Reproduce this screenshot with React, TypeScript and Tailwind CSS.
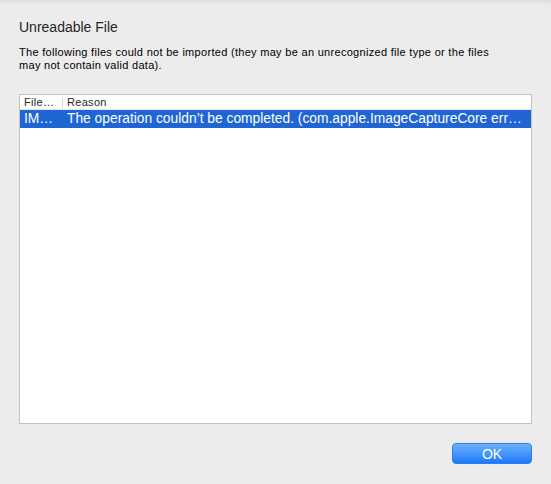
const App = () => {
	return (
		<div
			className="relative w-[551px] h-[484px] bg-[#ececec] text-[#1a1a1a] overflow-hidden"
			style={{ fontFamily: '"Liberation Sans", Arial, sans-serif' }}
		>
			{/* window top shade */}
			<div className="absolute top-0 left-0 right-0 h-[5px] bg-gradient-to-b from-[#dcdcdc] to-[#ececec]" />

			<div className="flex flex-col px-[19px] pt-[18px]">
				<h1 className="text-[14px] leading-[18px] text-[#262626]">Unreadable File</h1>
				<p className="mt-[10px] text-[11px] leading-[13px] tracking-[0.3px] text-black w-[486px]">
					The following files could not be imported (they may be an unrecognized file type or the files may not
					contain valid data).
				</p>

				<div className="mt-[22px] h-[330px] bg-white border border-[#c2c2c2] flex flex-col">
					<div className="flex h-[15px] items-center text-[11px] tracking-[0.3px] text-[#262626] border-b border-[#e6e6e6]">
						<div className="w-[42px] pl-[4px] shrink-0">File…</div>
						<div className="h-[11px] w-px bg-[#d6d6d6]" />
						<div className="pl-[4px]">Reason</div>
					</div>
					<div className="flex h-[18px] items-center text-[13.8px] text-white bg-[#1f66d4] whitespace-nowrap">
						<div className="w-[43px] pl-[4px] shrink-0">IM…</div>
						<div className="pl-[4px]">
							The operation couldn’t be completed. (com.apple.ImageCaptureCore err…
						</div>
					</div>
				</div>

				<div className="flex justify-end mt-[19px]">
					<button className="w-[80px] h-[21px] rounded-[4px] border border-[#2d7cf0] bg-gradient-to-b from-[#6cb1fb] to-[#1978fa] text-white text-[14px] leading-none">
						OK
					</button>
				</div>
			</div>
		</div>
	);
};

export default App;
